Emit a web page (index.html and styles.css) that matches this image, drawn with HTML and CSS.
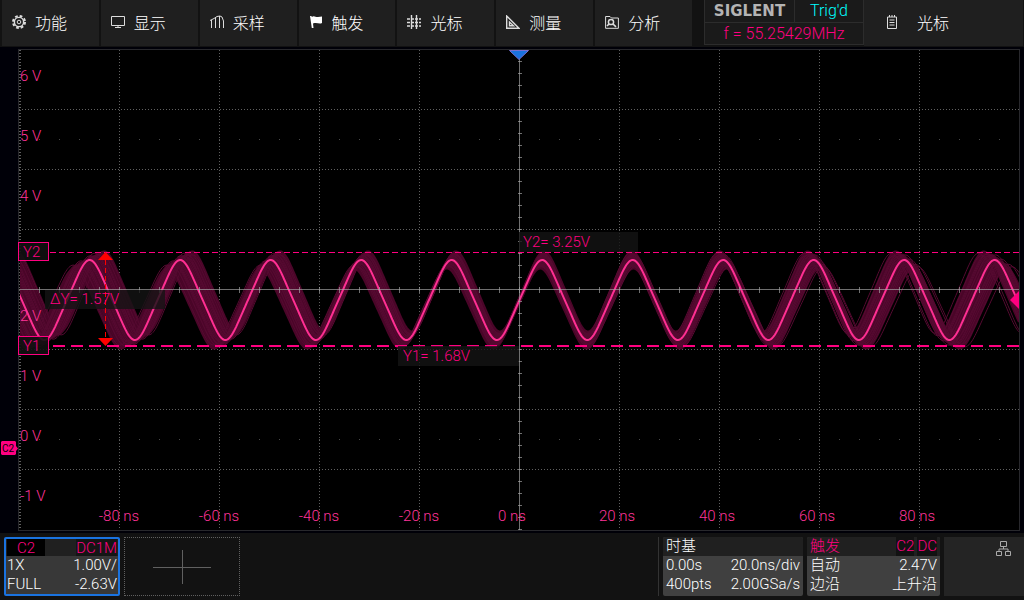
FILE: index.html
```
<!DOCTYPE html>
<html lang="zh-CN">

<head>
    <meta charset="utf-8">
    <title>SIGLENT</title>
    <link rel="stylesheet" href="styles.css">
</head>

<body>
    <header class="topbar">
        <nav class="tabs">
            <button class="tab">
                <svg class="icon" viewBox="0 0 14 14">
                    <circle cx="7" cy="7" r="6" stroke-width="2" stroke-dasharray="2.7 2.01"></circle>
                    <circle cx="7" cy="7" r="4.6" stroke-width="1.4"></circle>
                    <circle cx="7" cy="7" r="1.8"></circle>
                </svg>
                功能
            </button>
            <button class="tab">
                <svg class="icon" viewBox="0 0 14 14">
                    <path d="M.5 1.5h13v9H.5zM7 10.5v2M4 12.5h6"></path>
                </svg>
                显示
            </button>
            <button class="tab">
                <svg class="icon" viewBox="0 0 14 14">
                    <path d="M0 5.500L4 3.500L7 1.500L10 1L12 2L13.500 6V13M1.500 5v8M5.500 3v10M9.500 1v12"></path>
                </svg>
                采样
            </button>
            <button class="tab">
                <svg class="icon" viewBox="0 0 14 14">
                    <path class="solid" d="M1 1l1.500 0l.3 1C5 0 7 2.500 9 2L13 1.500V8C10 9.500 8 7 4 8.500L4.500 13H2.800z"></path>
                </svg>
                触发
            </button>
            <button class="tab">
                <svg class="icon" viewBox="0 0 14 14">
                    <path stroke-width="1.4" d="M4.500 0v14M9.500 0v14"></path>
                    <path stroke-width="1.4" stroke-dasharray="3 1" d="M0 4h14M0 7.500h14M0 11h14"></path>
                </svg>
                光标
            </button>
            <button class="tab">
                <svg class="icon" viewBox="0 0 14 14">
                    <path stroke-width="1.4" d="M.7 1v12.300H13zM3.500 7v3.700H7.500z"></path>
                </svg>
                测量
            </button>
            <button class="tab">
                <svg class="icon" viewBox="0 0 14 14">
                    <path d="M.6 13.300V1.500H5L6.500 3H13.400V13.300z"></path>
                    <circle cx="6" cy="7" r="2.600" stroke-width="1.500"></circle>
                    <path stroke-width="1.700" d="M8 9l3 2.800M2 11l2-2"></path>
                </svg>
                分析
            </button>
        </nav>
        <section class="info">
            <strong class="brand">SIGLENT</strong>
            <span class="status">Trig'd</span>
            <span class="freq">f = 55.25429MHz</span>
        </section>
        <button class="tab current">
            <svg class="icon" viewBox="0 0 14 14">
                <path d="M2.500 2h9v11.500h-9zM4.500 0v2M7 0v2M9.500 0v2M4.500 5h5M4.500 7.500h5M4.500 10h5"></path>
            </svg>
            光标
        </button>
    </header>

    <main class="scope">
        <svg class="screen" viewBox="0 47 1024 486">
            <defs>
                <clipPath id="plot">
                    <rect x="20" y="50" width="999" height="480"></rect>
                </clipPath>
            </defs>
            <rect x="18.500" y="49.500" width="1001" height="481" class="frame"></rect>
            <g id="grid"></g>
            <g id="wave" clip-path="url(#plot)"></g>
            <path class="axis" d="M19 289.500H1019M519.500 50V530"></path>
            <g id="ticks"></g>

            <g id="scale" class="scale"></g>

            <path class="y2line" d="M50 252.500H1019"></path>
            <path class="y1line" d="M53 346H1019"></path>

            <rect class="shade" x="45" y="290" width="120" height="19"></rect>
            <rect class="shade" x="519" y="232" width="119" height="20"></rect>
            <rect class="shade" x="398" y="346" width="121" height="20"></rect>

            <path class="delta" d="M105.500 260V338"></path>
            <path class="red" d="M105.500 252L113 260H98zM105.500 346L113 338H98z"></path>

            <rect class="tag" x="18.500" y="242.500" width="30" height="18"></rect>
            <rect class="tag" x="18.500" y="336.500" width="30" height="18"></rect>
            <g class="cursor">
                <text x="23" y="257">Y2</text>
                <text x="23" y="351">Y1</text>
                <text x="50" y="304">ΔY= 1.57V</text>
                <text x="523" y="247">Y2= 3.25V</text>
                <text x="403" y="361">Y1= 1.68V</text>
            </g>

            <path class="trigpos" d="M509.500 50.500H528.500L519 59.500z"></path>
            <path class="pink" d="M1010 300L1019 291V309z"></path>
            <path class="pink" d="M2 441H15L16 442V446L18 448.500L16 451V454L15 455H2L1 454V442z"></path>
            <text class="badge" x="2" y="452">C2</text>
        </svg>
    </main>

    <footer class="bottombar">
        <button class="box channel">
            <span class="row head"><span class="name">C2</span><span class="coupling">DC1M</span></span>
            <span class="row"><span>1X</span><span>1.00V/</span></span>
            <span class="row"><span>FULL</span><span>-2.63V</span></span>
        </button>
        <button class="add" aria-label="+">
            <svg width="58" height="34" viewBox="0 0 58 34">
                <path d="M0 17.500H58M29.500 0V34"></path>
            </svg>
        </button>
        <div class="spacer"></div>
        <button class="box timebase">
            <span class="row head">时基</span>
            <span class="row"><span>0.00s</span><span>20.0ns/div</span></span>
            <span class="row"><span>400pts</span><span>2.00GSa/s</span></span>
        </button>
        <button class="box trigger">
            <span class="row head"><span>触发</span><span class="chips"><span>C2</span><span>DC</span></span></span>
            <span class="row"><span>自动</span><span>2.47V</span></span>
            <span class="row"><span>边沿</span><span>上升沿</span></span>
        </button>
        <div class="network">
            <svg width="16" height="16" viewBox="0 0 16 16">
                <path d="M4.500 .5h6v5h-6zM.5 10.500h5v4h-5zM9.500 10.500h5v4h-5zM7.500 5.500v2.500M3 10.500V8h9v2.500"></path>
            </svg>
        </div>
    </footer>
    <script src="scope.js"></script>
</body>

</html>
```
FILE: styles.css
```
* {
    box-sizing: border-box;
}

body {
    margin: 0;
    min-height: 100vh;
    display: flex;
    flex-direction: column;
    background: #121212;
    color: #fff;
    font-family: Roboto, "Liberation Sans", "Noto Sans CJK SC", sans-serif;
    font-size: 15px;
    font-weight: 300;
}

button {
    margin: 0;
    padding: 0;
    border: 0;
    color: inherit;
    font: inherit;
    text-align: left;
}

.topbar {
    display: flex;
    height: 47px;
    padding: 0 1px 1px 2px;
}

.tabs {
    flex: 1;
    display: grid;
    grid-template-columns: repeat(7, 1fr);
    gap: 2px;
}

.tab {
    display: flex;
    align-items: center;
    gap: 9px;
    padding-left: 10px;
    padding-bottom: 3px;
    background: #1f1f1f;
    font-family: "Noto Sans CJK SC", sans-serif;
    font-size: 16px;
}

.current {
    width: 159px;
    padding-left: 21px;
    gap: 18px;
}

.icon {
    width: 14px;
    height: 14px;
    fill: none;
    stroke: #ddd;
}

.icon .solid {
    fill: #fff;
    stroke: none;
}

.info {
    display: grid;
    grid-template-columns: 89px 1fr;
    grid-template-rows: 22px 21px;
    gap: 1px;
    width: 160px;
    height: 45px;
    margin-left: 12px;
    padding: 0 1px 1px;
    background: #2c2c2c;
    text-align: center;
    font-size: 16px;
    line-height: 22px;
}

.info > * {
    background: #1a1a1a;
}

.brand {
    color: #b4b4b4;
    font: bold 15px/22px "DejaVu Sans", sans-serif;
}

.status {
    color: #00ffff;
}

.freq {
    grid-column: 1 / 3;
    color: #ff0080;
}

.scope {
    flex: 1;
    background: #000008;
}

.screen {
    display: block;
    width: 100%;
}

.frame {
    fill: #000;
    stroke: #28282c;
}

.dots {
    fill: none;
    stroke: #606060;
    stroke-dasharray: 1 2;
}

.sparse {
    fill: none;
    stroke: #4c4c4c;
    stroke-dasharray: 1 19;
}

.edge {
    fill: none;
    stroke: #606060;
    stroke-width: 2;
    stroke-dasharray: 1 2;
}

.axis,
.tick {
    fill: none;
    stroke: #aaa;
    stroke-opacity: .65;
}

.ghost {
    fill: none;
    stroke: #4b0629;
    stroke-width: 2;
}

.ghost.alt {
    stroke: #560a31;
    stroke-width: 1;
}

.trace {
    fill: none;
    stroke: #ff2f92;
    stroke-width: 2;
}

.scale {
    fill: #ff3399;
}

.middle {
    text-anchor: middle;
}

.y2line {
    stroke: #ff0080;
    stroke-dasharray: 6 3;
}

.y1line {
    stroke: #ff0080;
    stroke-width: 2;
    stroke-dasharray: 12 6;
}

.shade {
    fill: #141414;
    fill-opacity: .8;
}

.delta {
    stroke: #f00;
    stroke-dasharray: 5 3;
}

.red {
    fill: #f00;
}

.tag {
    fill: #111;
    fill-opacity: .9;
    stroke: #ff0080;
}

.cursor,
.pink {
    fill: #ff0080;
}

.trigpos {
    fill: #1a73e0;
    stroke: #7a70d0;
}

.badge {
    font-size: 10px;
    font-weight: 400;
    fill: #000;
}

.bottombar {
    display: flex;
    gap: 4px;
    height: 67px;
    padding: 4px 0 4px 4px;
}

.box {
    display: flex;
    flex-direction: column;
    background: #404040;
    border-radius: 2px;
    overflow: hidden;
}

.row {
    display: flex;
    justify-content: space-between;
    width: 100%;
    height: 19px;
    padding: 0 3px;
    line-height: 18px;
}

.head {
    background: #202020;
}

.channel {
    width: 116px;
    border: 2px solid #1a73e0;
    background: #383838;
}

.channel .row {
    padding: 0 1px;
}

.channel .head {
    height: 17px;
    color: #ff0080;
}

.name {
    width: 38px;
    background: #000;
    text-align: center;
}

.coupling {
    background: #151515;
}

.add {
    display: grid;
    place-items: center;
    width: 116px;
    border: 1px dotted #606060;
    background: #121212;
}

.add svg {
    fill: none;
    stroke: #606060;
}

.spacer {
    flex: 1;
    border-right: 1px solid #333;
}

.timebase {
    width: 140px;
}

.trigger {
    width: 133px;
}

.trigger .head {
    color: #ff0080;
}

.chips {
    display: flex;
    gap: 3px;
}

.chips span {
    background: #121212;
}

.network {
    width: 80px;
    padding: 4px 12px;
    background: #242424;
    text-align: right;
}

.network svg {
    fill: none;
    stroke: #aaa;
}
```
FILE: scope.js
```
var NS = "http://www.w3.org/2000/svg";
var left = 19, right = 1019, top0 = 50, bottom = 530;
var centerX = 519.5, centerY = 300;
var period = 90.5, amp = 40;

function add(parent, tag, attrs, text) {
    var el = document.createElementNS(NS, tag);
    for (var key in attrs) {
        el.setAttribute(key, attrs[key]);
    }
    if (text) {
        el.textContent = text;
    }
    document.getElementById(parent).appendChild(el);
}

// graticule
for (var x = 119; x < right; x += 100) {
    if (x != 519) {
        add("grid", "path", { class: "dots", d: "M" + (x + 0.5) + " " + top0 + "V" + bottom });
    }
}
for (var y = 109; y < bottom; y += 60) {
    if (y != 289 && y != 529) {
        add("grid", "path", { class: "dots", d: "M" + left + " " + (y + 0.5) + "H" + right });
    }
}
add("grid", "path", { class: "sparse", d: "M39 139.5H1019M39 439.5H1019" });
add("grid", "path", { class: "edge", d: "M20 50V530" });

for (x = 39; x < right; x += 20) {
    add("ticks", "path", { class: "tick", d: "M" + (x + 0.5) + " 287V293" });
}
for (y = 61; y < bottom; y += 12) {
    add("ticks", "path", { class: "tick", d: "M518 " + (y + 0.5) + "H522" });
}

// v is the vertical drift of a sweep, jitter grows away from the trigger
function sweep(v, jitter) {
    var d = "";
    for (var x = left; x <= right; x += 1) {
        var dist = centerX - x;
        var shift = v * (2.5 + dist * 0.029) + jitter * Math.abs(dist) * 0.016;
        var a = 2 * Math.PI * (x - centerX - shift) / period;
        // a little third harmonic straightens the slopes
        var y = centerY - v * 8.5 - amp * (Math.sin(a) - 0.05 * Math.sin(3 * a)) / 1.05;
        d += (d ? "L" : "M") + x + " " + y.toFixed(1);
    }
    return d;
}

for (var i = -10; i <= 10; i++) {
    add("wave", "path", { class: "ghost", d: sweep(i / 10, 0) });
    add("wave", "path", { class: "ghost", d: sweep(i / 14, Math.sin(i * 5) / 2) });
}
[-0.8, -0.5, 0.1, 0.6].forEach(function (v) {
    add("wave", "path", { class: "ghost alt", d: sweep(v, 1) });
    add("wave", "path", { class: "ghost alt", d: sweep(-v, -1) });
});
for (i = -8; i <= 8; i++) {
    add("wave", "path", { class: "ghost alt", d: sweep(i / 11, Math.cos(i * 3) / 3) });
}
add("wave", "path", { class: "trace", d: sweep(0, 0) });

// axis labels, the 3 V one is covered by the Y2 tag
["6 V", "5 V", "4 V", "", "2 V", "1 V", "0 V", "-1 V"].forEach(function (label, i) {
    if (label) {
        add("scale", "text", { x: 20, y: 81 + i * 60 }, label);
    }
});
for (i = -4; i <= 4; i++) {
    var labelX = 519 + i * 100;
    if (i >= 0) {
        labelX -= i == 0 ? 7 : 2;
    }
    add("scale", "text", { class: "middle", x: labelX, y: 521 }, i * 20 + " ns");
}
```
